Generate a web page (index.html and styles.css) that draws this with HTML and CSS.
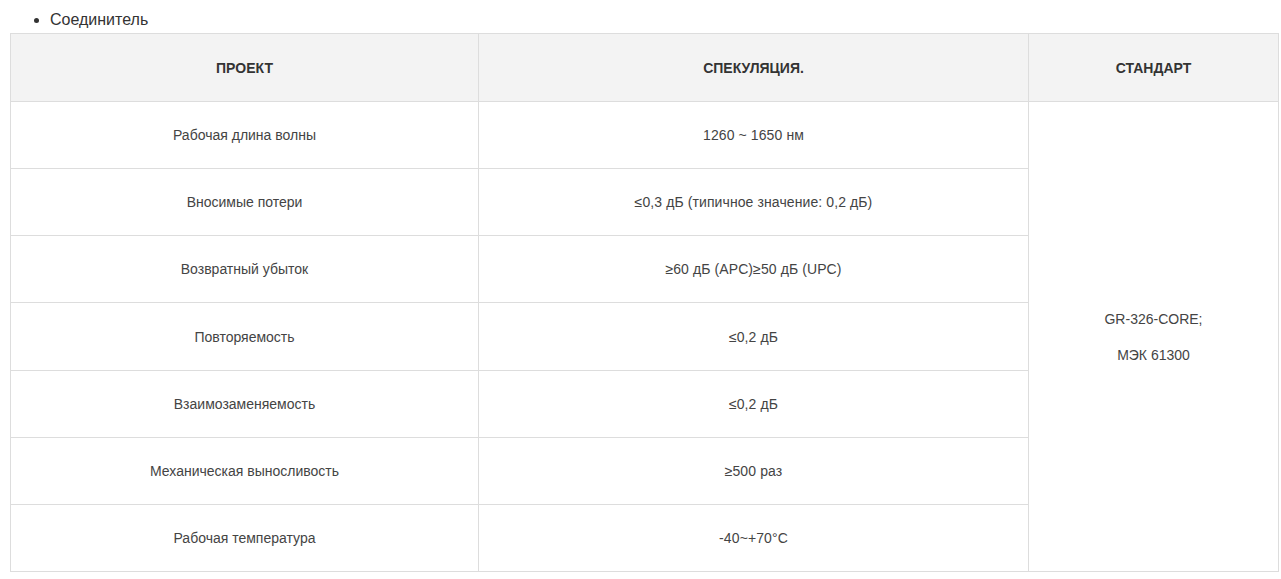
FILE: index.html
```html
<!DOCTYPE html>
<html lang="ru">
<head>
<meta charset="utf-8">
<link rel="stylesheet" href="styles.css">
</head>
<body>
<div class="page">
  <ul class="list">
    <li>Соединитель</li>
  </ul>
  <table class="spec">
    <colgroup>
      <col class="c1">
      <col class="c2">
      <col class="c3">
    </colgroup>
    <thead>
      <tr>
        <th>ПРОЕКТ</th>
        <th>СПЕКУЛЯЦИЯ.</th>
        <th>СТАНДАРТ</th>
      </tr>
    </thead>
    <tbody>
      <tr>
        <td>Рабочая длина волны</td>
        <td class="num">1260 ~ 1650 нм</td>
        <td rowspan="7" class="std"><p>GR-326-CORE;</p><p>МЭК 61300</p></td>
      </tr>
      <tr><td>Вносимые потери</td><td class="num">≤0,3 дБ (типичное значение: 0,2 дБ)</td></tr>
      <tr><td>Возвратный убыток</td><td class="num">≥60 дБ (APC)≥50 дБ (UPC)</td></tr>
      <tr class="tall"><td>Повторяемость</td><td class="num">≤0,2 дБ</td></tr>
      <tr><td>Взаимозаменяемость</td><td class="num">≤0,2 дБ</td></tr>
      <tr><td>Механическая выносливость</td><td class="num">≥500 раз</td></tr>
      <tr><td>Рабочая температура</td><td class="num">-40~+70°C</td></tr>
    </tbody>
  </table>
</div>
</body>
</html>
```
FILE: styles.css
```css
html, body {
  margin: 0;
  padding: 0;
  background: #fff;
}
.page {
  padding: 7px 3px 0 10px;
  font-family: "Liberation Sans", Arial, sans-serif;
  color: #333;
}
.list {
  margin: 0;
  padding-left: 40px;
  font-size: 16px;
  line-height: 26px;
  color: #333;
}
.spec {
  width: 1268px;
  border-collapse: collapse;
  table-layout: fixed;
  font-size: 14px;
  color: #444;
}
.c1 { width: 468px; }
.c2 { width: 550px; }
.c3 { width: 250px; }
.spec th, .spec td {
  border: 1px solid #dddddd;
  text-align: center;
  vertical-align: middle;
  padding: 0;
}
.spec th {
  background: #f3f3f3;
  height: 67px;
  font-size: 14px;
  font-weight: bold;
  color: #333;
}
.spec td {
  height: 66px;
}
.spec .tall td {
  height: 67px;
}
.num {
  letter-spacing: 0.1px;
}
.std p {
  margin: 0;
  line-height: 36px;
}
```
